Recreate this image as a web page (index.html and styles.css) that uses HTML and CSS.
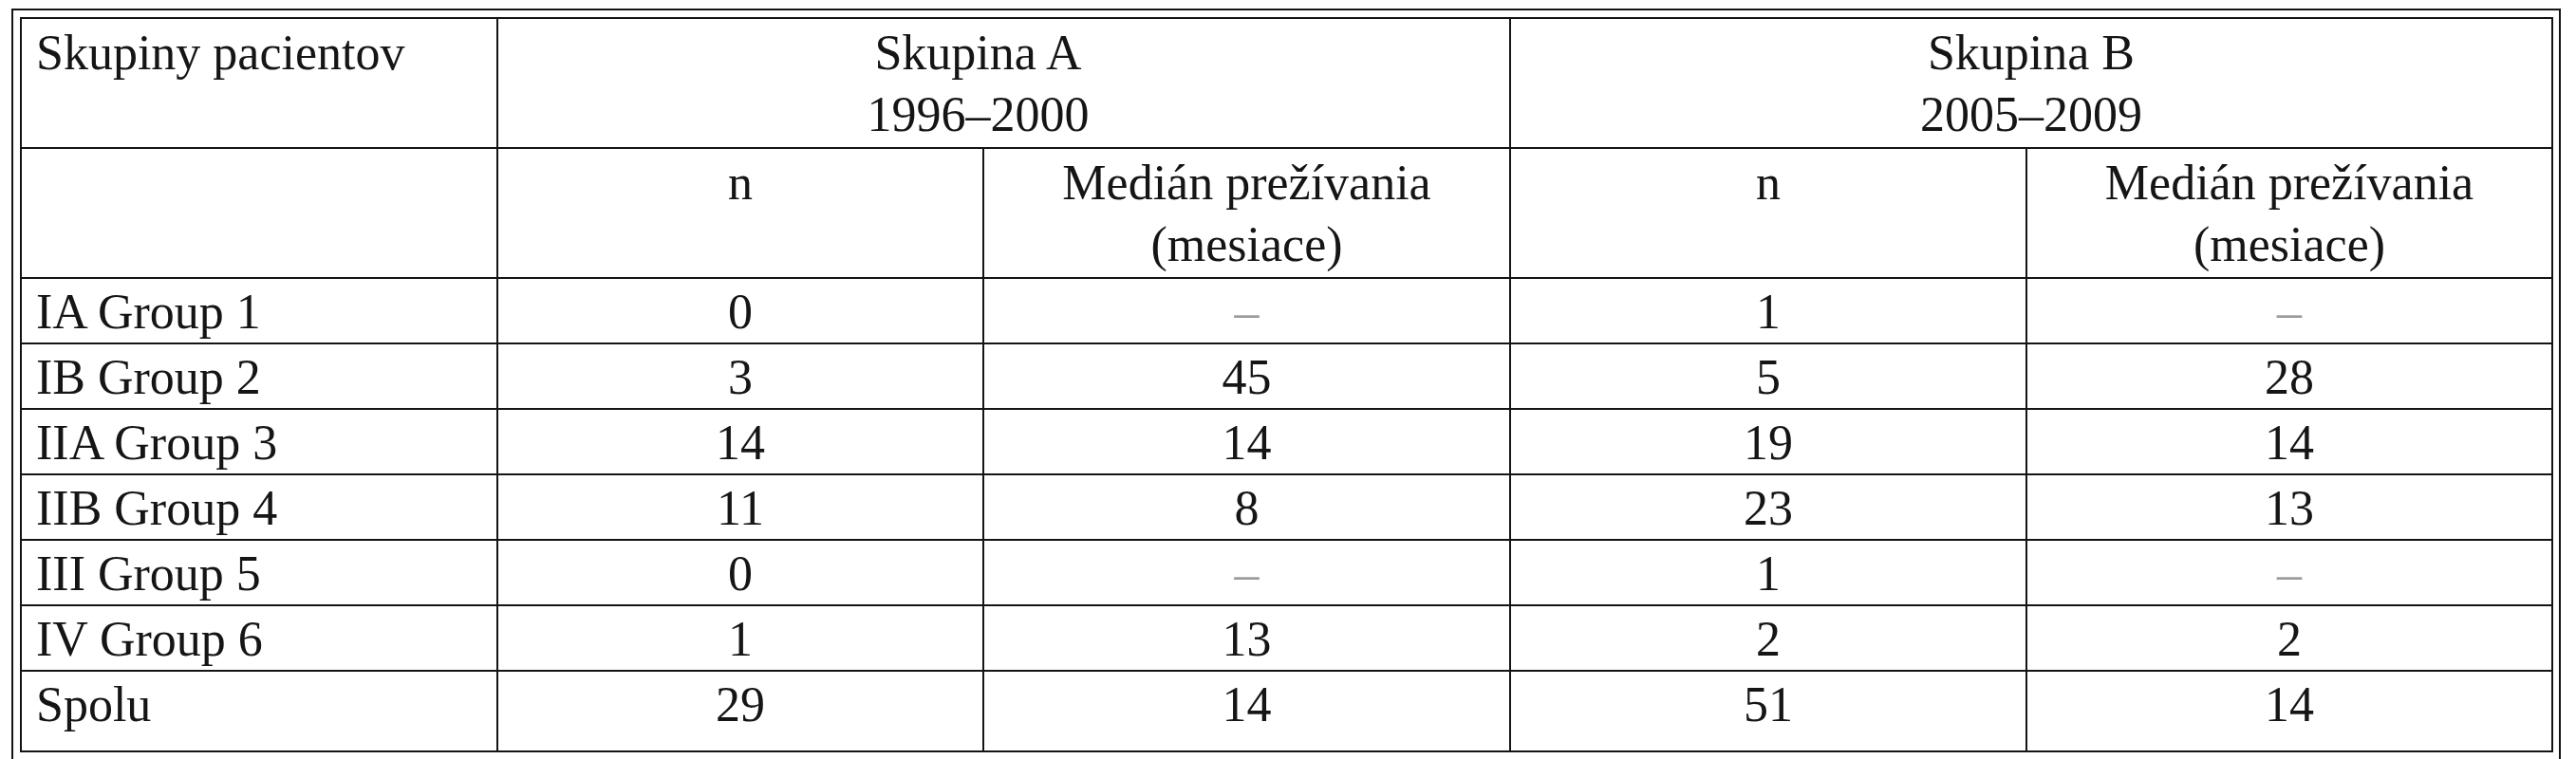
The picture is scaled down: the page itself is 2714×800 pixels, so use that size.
FILE: index.html
```html
<!DOCTYPE html>
<html lang="sk">
<head>
<meta charset="utf-8">
<title>Skupiny pacientov</title>
<link rel="stylesheet" href="styles.css">
</head>
<body>
<div class="frame">
  <table class="data">
    <colgroup>
      <col class="c1"><col class="c2"><col class="c3"><col class="c4"><col class="c5">
    </colgroup>
    <tr class="head">
      <td class="label">Skupiny pacientov</td>
      <td colspan="2" class="group-a">Skupina A<br>1996–2000</td>
      <td colspan="2">Skupina B<br>2005–2009</td>
    </tr>
    <tr class="head">
      <td class="label"></td>
      <td>n</td>
      <td>Medián prežívania<br>(mesiace)</td>
      <td>n</td>
      <td>Medián prežívania<br>(mesiace)</td>
    </tr>
    <tr>
      <td class="label">IA Group 1</td>
      <td>0</td><td class="dash">–</td><td>1</td><td class="dash">–</td>
    </tr>
    <tr>
      <td class="label">IB Group 2</td>
      <td>3</td><td>45</td><td>5</td><td>28</td>
    </tr>
    <tr>
      <td class="label">IIA Group 3</td>
      <td>14</td><td>14</td><td>19</td><td>14</td>
    </tr>
    <tr>
      <td class="label">IIB Group 4</td>
      <td>11</td><td>8</td><td>23</td><td>13</td>
    </tr>
    <tr>
      <td class="label">III Group 5</td>
      <td>0</td><td class="dash">–</td><td>1</td><td class="dash">–</td>
    </tr>
    <tr>
      <td class="label">IV Group 6</td>
      <td>1</td><td>13</td><td>2</td><td>2</td>
    </tr>
    <tr class="total">
      <td class="label">Spolu</td>
      <td>29</td><td>14</td><td>51</td><td>14</td>
    </tr>
  </table>
</div>
</body>
</html>
```

FILE: styles.css
```css
html, body {
  background: #ffffff;
}

body {
  margin: 9px 16px 0 12px;
  font-family: "Liberation Serif", "Times New Roman", serif;
  color: #151515;
}

.frame {
  border: 2px solid #141414;
  padding: 7px;
}

.data {
  width: 100%;
  table-layout: fixed;
  border-collapse: collapse;
  border: 2px solid #141414;
}

.c1 { width: 502px; }
.c2 { width: 512px; }
.c3 { width: 555px; }
.c4 { width: 544px; }
.c5 { width: 554px; }

.data td {
  border: 2px solid #141414;
  padding: 2px 0 0 0;
  font-size: 52px;
  line-height: 65px;
  text-align: center;
  vertical-align: top;
  white-space: nowrap;
}

.data tr.head td {
  padding-top: 3px;
  padding-bottom: 2px;
}

.data tr.head td:empty {
  height: 130px;
}

.data td.label {
  text-align: left;
  padding-left: 15px;
}

.data td.group-a {
  padding-right: 54px;
}

.data td.dash {
  color: #9a9a9a;
}

.data tr.total td {
  padding-bottom: 16px;
}
```
